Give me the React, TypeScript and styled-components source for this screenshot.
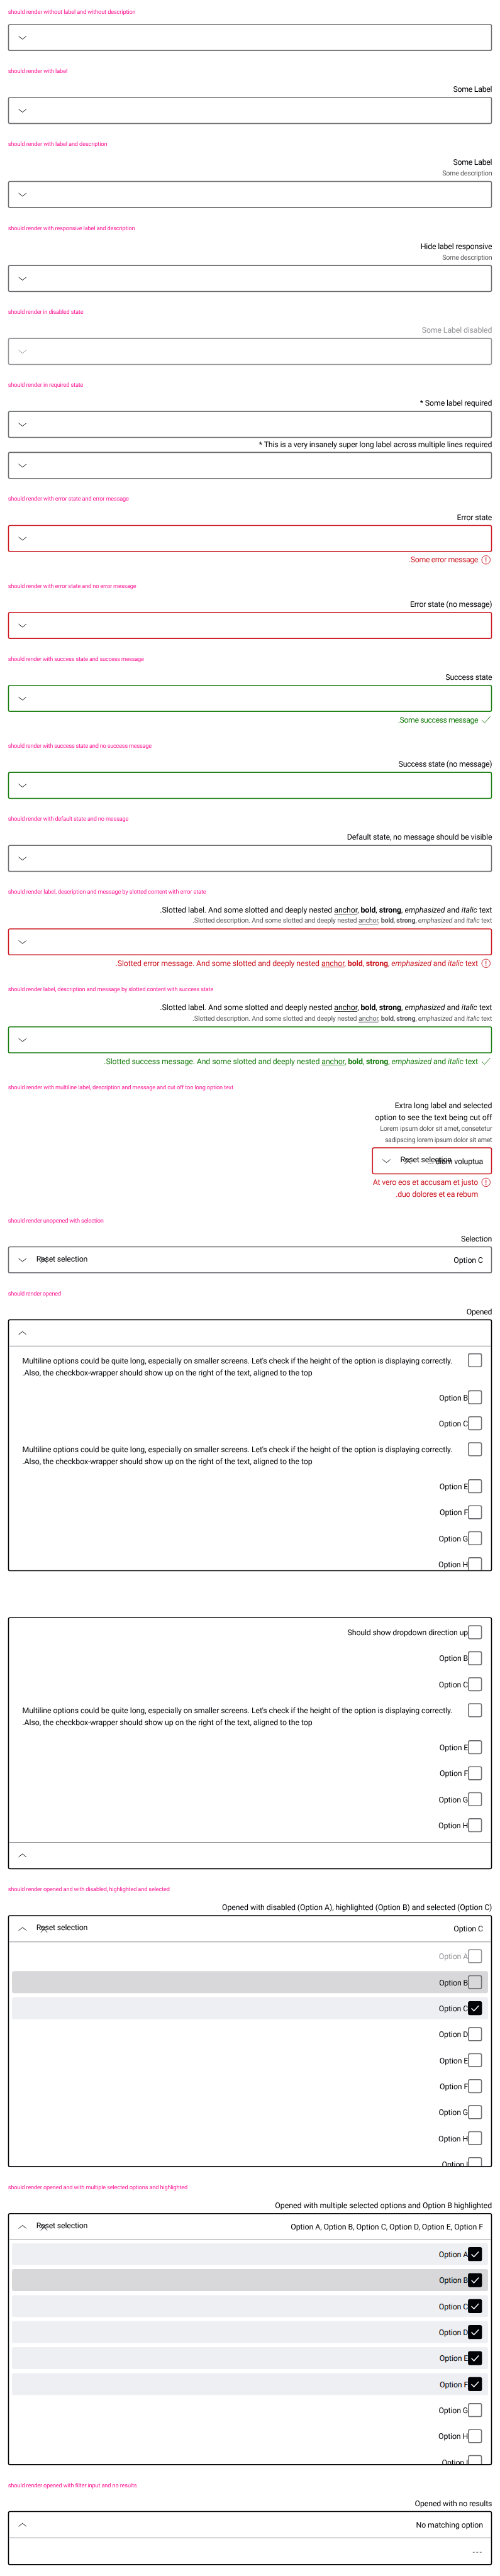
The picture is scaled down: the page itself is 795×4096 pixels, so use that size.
import React from "react";
import styled, { createGlobalStyle, css } from "styled-components";

const color = {
  text: "#010205",
  muted: "#535457",
  outline: "#6b6d70",
  disabled: "#949598",
  error: "#cc1922",
  success: "#197e10",
  caption: "#ff1493",
  highlighted: "#d8d8da",
  selected: "#eeeff3",
};

type Status = "none" | "error" | "success" | "disabled";

const outlineOf: Record<Status, string> = {
  none: color.outline,
  error: color.error,
  success: color.success,
  disabled: color.disabled,
};

const GlobalStyle = createGlobalStyle`
  *, *::before, *::after { box-sizing: border-box; }
  body {
    margin: 0;
    background: #fff;
    color: ${color.text};
    font-family: Roboto, "Liberation Sans", sans-serif;
    text-rendering: geometricPrecision;
  }
  a { color: inherit; text-decoration: underline; text-underline-offset: 2px; }
`;

/* ---------- page ---------- */

const Viewport = styled.div`
  width: 795px;
  height: 4096px;
  overflow: hidden;
`;

const Page = styled.main`
  width: 1000px;
  height: 5153px;
  padding: 0 16px;
  transform: scale(0.795, 0.7949);
  transform-origin: 0 0;
`;

const Section = styled.section`
  margin-bottom: 16px;
`;

const Caption = styled.p<{ $track: number }>`
  margin: 0;
  height: 48px;
  line-height: 48px;
  font-size: 11.6px;
  letter-spacing: ${(p) => p.$track}px;
  color: ${color.caption};
  white-space: nowrap;
`;

const Field = styled.div<{ $width?: number }>`
  width: ${(p) => (p.$width ? `${p.$width}px` : "100%")};
  margin-left: auto;
`;

/* ---------- texts ---------- */

const bodyText = css<{ $track?: number }>`
  font-size: 15.6px;
  line-height: 24px;
  letter-spacing: ${(p) => p.$track ?? -0.21}px;
  white-space: nowrap;
`;

const Label = styled.div<{ $disabled?: boolean }>`
  padding-top: 1px;
  margin-bottom: -1px;
  text-align: right;
  color: ${(p) => (p.$disabled ? color.disabled : color.text)};
`;

const LabelLine = styled.div<{ $track?: number }>`
  ${bodyText}
`;

const Description = styled.div<{ $track?: number; $height?: number }>`
  height: ${(p) => p.$height ?? 22}px;
  font-size: 13.5px;
  line-height: ${(p) => p.$height ?? 22}px;
  letter-spacing: ${(p) => p.$track ?? -0.3}px;
  text-align: right;
  white-space: nowrap;
  color: ${color.muted};
`;

const Message = styled.div<{ $status: "error" | "success" }>`
  display: flex;
  justify-content: flex-end;
  gap: 4px;
  margin-top: 4px;
  text-align: right;
  color: ${(p) => outlineOf[p.$status]};
`;

/* ---------- control ---------- */

const Control = styled.div<{ $status: Status }>`
  display: flex;
  align-items: center;
  justify-content: space-between;
  height: 54px;
  margin-top: 4px;
  padding: 0 16px 0 15px;
  border: 2px solid ${(p) => outlineOf[p.$status]};
  border-radius: 4px;
  color: ${(p) => (p.$status === "disabled" ? color.disabled : color.text)};
`;

const Actions = styled.div`
  position: relative;
  display: flex;
  align-items: center;
  gap: 19px;
`;

const ResetText = styled.span`
  ${bodyText}
  position: absolute;
  left: 39.5px;
  top: -2.5px;
`;

const Value = styled.span<{ $track?: number }>`
  ${bodyText}
  padding-top: 1px;
`;

/* ---------- opened dropdown ---------- */

const Dropdown = styled.div<{ $height: number; $gap?: number }>`
  display: flex;
  flex-direction: column;
  height: ${(p) => p.$height}px;
  margin-top: ${(p) => p.$gap ?? 4}px;
  border: 2px solid ${color.text};
  border-radius: 4px;
  overflow: hidden;
`;

const DropdownHead = styled.div<{ $bottom?: boolean }>`
  display: flex;
  flex: none;
  align-items: center;
  justify-content: space-between;
  height: ${(p) => (p.$bottom ? 52 : 52)}px;
  padding: 0 16px 0 15px;
  ${(p) =>
    p.$bottom
      ? `border-top: 1px solid ${color.outline};`
      : `border-bottom: 1px solid ${color.outline};`}
`;

const OptionList = styled.div`
  display: flex;
  flex: 1;
  flex-direction: column;
  gap: 8px;
  padding: 6px;
  min-height: 0;
  overflow: hidden;
`;

const OptionRow = styled.div<{ $tall?: boolean; $background?: string; $disabled?: boolean }>`
  display: flex;
  flex: none;
  align-items: flex-start;
  justify-content: ${(p) => (p.$tall ? "space-between" : "flex-end")};
  height: ${(p) => (p.$tall ? 66 : 44)}px;
  padding: 8px 12px 8px 20.6px;
  border-radius: 4px;
  background: ${(p) => p.$background ?? "transparent"};
  color: ${(p) => (p.$disabled ? color.disabled : color.text)};
`;

const OptionText = styled.div<{ $track?: number }>`
  ${bodyText}
  padding-top: 2.5px;
`;

const Check = styled.span<{ $checked?: boolean; $disabled?: boolean }>`
  display: block;
  flex: none;
  width: 28px;
  height: 28px;
  border: 2px solid ${(p) => (p.$checked ? color.text : p.$disabled ? color.disabled : color.outline)};
  border-radius: 4px;
  background: ${(p) => (p.$checked ? color.text : "transparent")};

  svg {
    display: block;
    margin: -2px;
  }
`;

const EmptyRow = styled.div`
  padding: 0 10px 0 0;
  height: 44px;
  font-size: 15.6px;
  line-height: 45px;
  letter-spacing: 2.6px;
  text-align: right;
  color: ${color.muted};
`;

/* ---------- icons ---------- */

const Icon = styled.svg`
  display: block;
  flex: none;
  width: 24px;
  height: 24px;
  fill: none;
  stroke: currentColor;
  stroke-width: 1.2;
`;

const ChevronDown = () => (
  <Icon viewBox="0 0 24 24"><path d="M4.2 9.3 12 15.5l7.8-6.2" /></Icon>
);
const ChevronUp = () => (
  <Icon viewBox="0 0 24 24"><path d="M4.2 14.7 12 8.5l7.8 6.2" /></Icon>
);
const Close = () => (
  <Icon viewBox="0 0 24 24"><path d="M5.4 5.4l13.2 13.2M18.6 5.4 5.4 18.6" /></Icon>
);
const Exclamation = () => (
  <Icon viewBox="0 0 24 24">
    <circle cx="12" cy="12" r="8.5" />
    <path d="M12 7v6.8M12 15.2v1.8" strokeWidth="1.5" />
  </Icon>
);
const Tick = () => (
  <Icon viewBox="0 0 24 24"><path d="M3.4 12.4 9.1 18.2 20.6 5" /></Icon>
);
const BoxTick = () => (
  <svg width="28" height="28" viewBox="0 0 28 28" fill="none" stroke="#fff" strokeWidth="1.9">
    <path d="M6.9 14.2l5 5.2L21.4 9" />
  </svg>
);

/* ---------- composed parts ---------- */

const Reset = () => (
  <>
    <Close />
    <ResetText $track={-0.23}>Reset selection</ResetText>
  </>
);

interface SelectProps {
  status?: Status;
  value?: string;
  track?: number;
}

const Select = ({ status = "none", value, track }: SelectProps) => (
  <Control $status={status}>
    <Actions>
      <ChevronDown />
      {value && <Reset />}
    </Actions>
    {value && <Value $track={track}>{value}</Value>}
  </Control>
);

interface OptionProps {
  name: string;
  track?: number;
  checked?: boolean;
  highlighted?: boolean;
  disabled?: boolean;
}

const Option = ({ name, track, checked, highlighted, disabled }: OptionProps) => (
  <OptionRow
    $disabled={disabled}
    $background={highlighted ? color.highlighted : checked ? color.selected : undefined}
  >
    <OptionText $track={track}>{name}</OptionText>
    <Check $checked={checked} $disabled={disabled}>{checked && <BoxTick />}</Check>
  </OptionRow>
);

const LongOption = () => (
  <OptionRow $tall>
    <div>
      <OptionText $track={-0.157}>
        Multiline options could be quite long, especially on smaller screens. Let's check if the
        height of the option is displaying correctly.
      </OptionText>
      <LabelLine $track={-0.134}>
        .Also, the checkbox-wrapper should show up on the right of the text, aligned to the top
      </LabelLine>
    </div>
    <Check />
  </OptionRow>
);

const options = (letters: string) => [...letters].map((l) => <Option key={l} name={`Option ${l}`} />);

const Note = ({
  status,
  lines,
}: {
  status: "error" | "success";
  lines: [React.ReactNode, number][];
}) => (
  <Message $status={status}>
    <div>
      {lines.map(([text, track], i) => (
        <LabelLine key={i} $track={track}>{text}</LabelLine>
      ))}
    </div>
    {status === "error" ? <Exclamation /> : <Tick />}
  </Message>
);

const Rich = ({ lead }: { lead: string }) => (
  <>
    {lead} And some slotted and deeply nested <a>anchor</a>, <b>bold</b>, <strong>strong</strong>,{" "}
    <em>emphasized</em> and <i>italic</i> text
  </>
);

export default function App() {
  return (
    <Viewport>
      <GlobalStyle />
      <Page>
        <Section>
          <Caption $track={-0.164}>should render without label and without description</Caption>
          <Field>
            <FirstControl />
          </Field>
        </Section>

        <Section>
          <Caption $track={-0.17}>should render with label</Caption>
          <Label><LabelLine $track={-0.387}>Some Label</LabelLine></Label>
          <Select />
        </Section>

        <Section>
          <Caption $track={-0.175}>should render with label and description</Caption>
          <Label><LabelLine $track={-0.387}>Some Label</LabelLine></Label>
          <Description $track={-0.354}>Some description</Description>
          <Select />
        </Section>

        <Section>
          <Caption $track={-0.203}>should render with responsive label and description</Caption>
          <Label><LabelLine $track={-0.247}>Hide label responsive</LabelLine></Label>
          <Description $track={-0.354}>Some description</Description>
          <Select />
        </Section>

        <Section>
          <Caption $track={-0.246}>should render in disabled state</Caption>
          <Label $disabled><LabelLine $track={-0.209}>Some Label disabled</LabelLine></Label>
          <Select status="disabled" />
        </Section>

        <Section>
          <Caption $track={-0.202}>should render in required state</Caption>
          <Label><LabelLine $track={-0.208}>* Some label required</LabelLine></Label>
          <Select />
          <Label>
            <LabelLine $track={-0.225}>
              * This is a very insanely super long label across multiple lines required
            </LabelLine>
          </Label>
          <Select />
        </Section>

        <Section>
          <Caption $track={-0.193}>should render with error state and error message</Caption>
          <Label><LabelLine>Error state</LabelLine></Label>
          <Select status="error" />
          <Note status="error" lines={[[".Some error message", -0.524]]} />
        </Section>

        <Section>
          <Caption $track={-0.205}>should render with error state and no error message</Caption>
          <Label><LabelLine $track={-0.329}>Error state (no message)</LabelLine></Label>
          <Select status="error" />
        </Section>

        <Section>
          <Caption $track={-0.301}>should render with success state and success message</Caption>
          <Label><LabelLine $track={-0.34}>Success state</LabelLine></Label>
          <Select status="success" />
          <Note status="success" lines={[[".Some success message", -0.611]]} />
        </Section>

        <Section>
          <Caption $track={-0.295}>should render with success state and no success message</Caption>
          <Label><LabelLine $track={-0.384}>Success state (no message)</LabelLine></Label>
          <Select status="success" />
        </Section>

        <Section>
          <Caption $track={-0.215}>should render with default state and no message</Caption>
          <Label>
            <LabelLine $track={-0.232}>Default state, no message should be visible</LabelLine>
          </Label>
          <Select />
        </Section>

        <Section>
          <Caption $track={-0.167}>
            should render label, description and message by slotted content with error state
          </Caption>
          <Label><LabelLine $track={-0.115}><Rich lead=".Slotted label." /></LabelLine></Label>
          <Description $track={-0.231} $height={21}><Rich lead=".Slotted description." /></Description>
          <Select status="error" />
          <Note status="error" lines={[[<Rich lead=".Slotted error message." />, -0.164]]} />
        </Section>

        <Section>
          <Caption $track={-0.206}>
            should render label, description and message by slotted content with success state
          </Caption>
          <Label><LabelLine $track={-0.115}><Rich lead=".Slotted label." /></LabelLine></Label>
          <Description $track={-0.231}><Rich lead=".Slotted description." /></Description>
          <Select status="success" />
          <Note status="success" lines={[[<Rich lead=".Slotted success message." />, -0.175]]} />
        </Section>

        <Section>
          <Caption $track={-0.17}>
            should render with multiline label, description and message and cut off too long option
            text
          </Caption>
          <Field $width={240}>
            <Label>
              <LabelLine $track={-0.134}>Extra long label and selected</LabelLine>
              <LabelLine $track={-0.098}>option to see the text being cut off</LabelLine>
            </Label>
            <Description $track={-0.305}>Lorem ipsum dolor sit amet, consetetur</Description>
            <Description $track={-0.417}>sadipscing lorem ipsum dolor sit amet</Description>
            <Select status="error" value="... diam voluptua" track={-0.264} />
            <Note
              status="error"
              lines={[
                ["At vero eos et accusam et justo", -0.238],
                [".duo dolores et ea rebum", -0.324],
              ]}
            />
          </Field>
        </Section>

        <Section>
          <Caption $track={-0.205}>should render unopened with selection</Caption>
          <Label><LabelLine $track={-0.24}>Selection</LabelLine></Label>
          <Select value="Option C" track={-0.151} />
        </Section>

        <Section>
          <Caption $track={-0.296}>should render opened</Caption>
          <Label><LabelLine $track={-0.406}>Opened</LabelLine></Label>
          <Dropdown $height={504}>
            <DropdownHead><ChevronUp /></DropdownHead>
            <OptionList>
              <LongOption />
              {options("BC")}
              <LongOption />
              {options("EFGH")}
            </OptionList>
          </Dropdown>
          <Dropdown $height={504} $gap={92}>
            <OptionList>
              <Option name="Should show dropdown direction up" track={-0.217} />
              {options("BC")}
              <LongOption />
              {options("EFGH")}
            </OptionList>
            <DropdownHead $bottom><ChevronUp /></DropdownHead>
          </Dropdown>
        </Section>

        <Section>
          <Caption $track={-0.198}>
            should render opened and with disabled, highlighted and selected
          </Caption>
          <Label>
            <LabelLine $track={-0.104}>
              Opened with disabled (Option A), highlighted (Option B) and selected (Option C)
            </LabelLine>
          </Label>
          <Dropdown $height={504}>
            <DropdownHead>
              <Actions><ChevronUp /><Reset /></Actions>
              <Value $track={-0.151}>Option C</Value>
            </DropdownHead>
            <OptionList>
              <Option name="Option A" disabled />
              <Option name="Option B" highlighted />
              <Option name="Option C" checked />
              {options("DEFGHI")}
            </OptionList>
          </Dropdown>
        </Section>

        <Section>
          <Caption $track={-0.199}>
            should render opened and with multiple selected options and highlighted
          </Caption>
          <Label>
            <LabelLine $track={-0.072}>
              Opened with multiple selected options and Option B highlighted
            </LabelLine>
          </Label>
          <Dropdown $height={504}>
            <DropdownHead>
              <Actions><ChevronUp /><Reset /></Actions>
              <Value $track={-0.096}>Option A, Option B, Option C, Option D, Option E, Option F</Value>
            </DropdownHead>
            <OptionList>
              <Option name="Option A" checked />
              <Option name="Option B" checked highlighted />
              <Option name="Option C" checked />
              <Option name="Option D" checked />
              <Option name="Option E" checked />
              <Option name="Option F" checked />
              {options("GHI")}
            </OptionList>
          </Dropdown>
        </Section>

        <Section>
          <Caption $track={-0.189}>should render opened with filter input and no results</Caption>
          <Label><LabelLine $track={-0.202}>Opened with no results</LabelLine></Label>
          <Dropdown $height={108}>
            <DropdownHead>
              <ChevronUp />
              <Value $track={-0.166}>No matching option</Value>
            </DropdownHead>
            <OptionList>
              <EmptyRow>---</EmptyRow>
            </OptionList>
          </Dropdown>
        </Section>
      </Page>
    </Viewport>
  );
}

const BareControl = styled(Control)`
  margin-top: 0;
`;

function FirstControl() {
  return (
    <BareControl $status="none">
      <ChevronDown />
    </BareControl>
  );
}
